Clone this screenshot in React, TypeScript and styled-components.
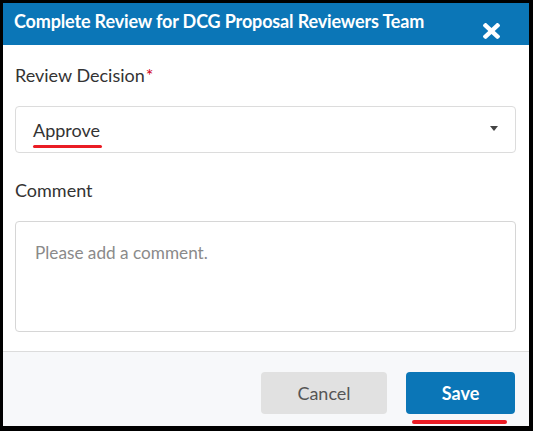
import React from "react";
import styled, { createGlobalStyle } from "styled-components";

const Global = createGlobalStyle`
  html, body { margin: 0; padding: 0; background: #000; }
  body { font-family: Lato, "Open Sans", sans-serif; color: #333; }
  * { box-sizing: border-box; }
`;

const Dialog = styled.div`
  margin: 3px 4px 5px 3px;
  width: 526px;
  height: 423px;
  background: #fff;
  display: flex;
  flex-direction: column;
  overflow: hidden;
`;

const Header = styled.div`
  height: 42px;
  flex: none;
  background: #0b76b7;
  display: flex;
  justify-content: space-between;
  align-items: flex-start;
  padding: 0 14px 0 11px;
`;

const Title = styled.h2`
  margin: 0;
  padding-top: 6px;
  font-size: 18px;
  line-height: 24px;
  font-weight: 700;
  color: #fff;
  letter-spacing: -0.15px;
`;

const CloseButton = styled.button`
  border: 0;
  background: none;
  padding: 0;
  margin-top: 20px;
  margin-right: 15px;
  width: 17px;
  height: 16px;
  cursor: pointer;
  display: flex;
  svg { display: block; }
`;

const Body = styled.div`
  flex: 1;
  padding: 18px 13px 0 12px;
  display: flex;
  flex-direction: column;
`;

const Label = styled.label<{ $gap: number }>`
  font-size: 18px;
  line-height: 24px;
  color: #333;
  margin-bottom: ${(p) => p.$gap}px;
`;

const Required = styled.span`
  color: #d0021b;
  margin-left: 1px;
`;

const SelectBox = styled.div`
  position: relative;
  height: 47px;
  border: 1px solid #dcdcdc;
  border-radius: 4px;
  display: flex;
  align-items: center;
  justify-content: space-between;
  padding: 0 17px 0 17px;
  margin-bottom: 25px;
  font-size: 18px;
  color: #333;
`;

const SelectValue = styled.span`
  position: relative;
  line-height: 24px;
`;

const Annotation = styled.span<{ $left: number; $right: number; $top: number; $h: number }>`
  position: absolute;
  left: ${(p) => p.$left}px;
  right: ${(p) => p.$right}px;
  top: ${(p) => p.$top}px;
  height: ${(p) => p.$h}px;
  background: #ea1c24;
  border-radius: 2px;
`;

const Caret = styled.span`
  width: 0;
  height: 0;
  border-left: 4.5px solid transparent;
  border-right: 4.5px solid transparent;
  border-top: 5px solid #444;
  margin-top: -2px;
`;

const CommentArea = styled.textarea`
  height: 111px;
  border: 1px solid #d6d6d6;
  border-radius: 4px;
  resize: none;
  padding: 19px 19px;
  font-family: Lato, sans-serif;
  font-size: 17.2px;
  line-height: 24px;
  color: #333;
  &::placeholder { color: #8a8a8a; }
`;

const Footer = styled.div`
  flex: none;
  height: 75px;
  border-top: 1px solid #dcdcdc;
  background: #f7f8fa;
  display: flex;
  justify-content: flex-end;
  align-items: flex-start;
  gap: 19px;
  padding: 20px 14px 0 0;
`;

const Button = styled.button<{ $primary?: boolean; $w: number }>`
  position: relative;
  width: ${(p) => p.$w}px;
  height: 42px;
  border: 0;
  border-radius: 4px;
  font-family: Lato, sans-serif;
  font-size: 18px;
  font-weight: ${(p) => (p.$primary ? 700 : 400)};
  background: ${(p) => (p.$primary ? "#0b76b7" : "#e1e1e1")};
  color: ${(p) => (p.$primary ? "#fff" : "#555")};
  cursor: pointer;
  padding: 0;
`;

export default function App() {
  return (
    <>
      <Global />
      <Dialog>
        <Header>
          <Title>Complete Review for DCG Proposal Reviewers Team</Title>
          <CloseButton aria-label="Close">
            <svg width="17" height="16" viewBox="0 80 352 352" preserveAspectRatio="none">
              <path
                fill="#fff"
                d="M242.72 256l100.07-100.07c12.28-12.28 12.28-32.19 0-44.48l-22.24-22.24c-12.28-12.28-32.19-12.28-44.48 0L176 189.28 75.93 89.21c-12.28-12.28-32.19-12.28-44.48 0L9.21 111.45c-12.28 12.28-12.28 32.19 0 44.48L109.28 256 9.21 356.07c-12.28 12.28-12.28 32.19 0 44.48l22.24 22.24c12.28 12.28 32.2 12.28 44.48 0L176 322.72l100.07 100.07c12.28 12.28 32.2 12.28 44.48 0l22.24-22.24c12.28-12.28 12.28-32.19 0-44.48L242.72 256z"
              />
            </svg>
          </CloseButton>
        </Header>
        <Body>
          <Label $gap={19}>
            Review Decision<Required>*</Required>
          </Label>
          <SelectBox>
            <SelectValue>
              Approve
              <Annotation $left={0} $right={-2} $top={27} $h={3} />
            </SelectValue>
            <Caret />
          </SelectBox>
          <Label $gap={19}>Comment</Label>
          <CommentArea placeholder="Please add a comment." />
        </Body>
        <Footer>
          <Button $w={126}>Cancel</Button>
          <Button $primary $w={109}>
            Save
            <Annotation $left={6} $right={8} $top={48} $h={4} />
          </Button>
        </Footer>
      </Dialog>
    </>
  );
}
